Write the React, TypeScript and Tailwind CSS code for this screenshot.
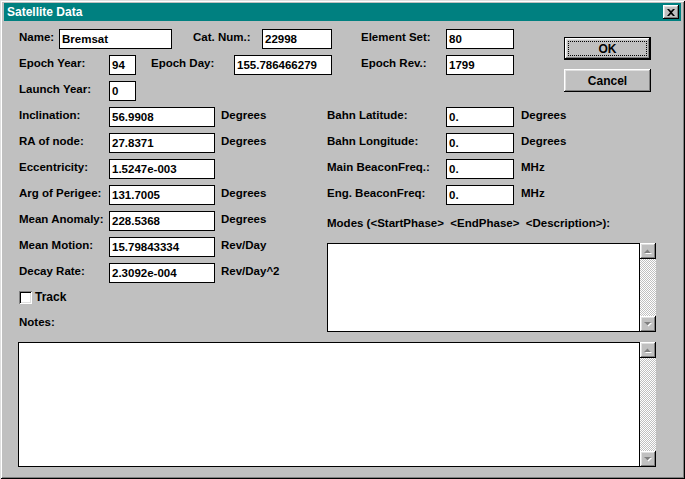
import React from 'react';

const bevel =
  'shadow-[inset_-1px_-1px_#000,inset_1px_1px_#fff,inset_-2px_-2px_#808080,inset_2px_2px_#dfdfdf]';

function Box({ w, value }: { w: string; value?: string }) {
  return (
    <div className={`${w} h-[20px] shrink-0 bg-white border border-black pl-[2px] leading-[18px] overflow-hidden whitespace-nowrap`}>
      {value}
    </div>
  );
}

function Label({ w, children, className = '' }: { w?: string; children: React.ReactNode; className?: string }) {
  return <div className={`${w ?? ''} shrink-0 leading-[16px] whitespace-nowrap ${className}`}>{children}</div>;
}

function Arrow({ down }: { down?: boolean }) {
  const pts = down ? '1,2 8,2 4.5,5.5' : '1,6 8,6 4.5,2.5';
  const ptsShadow = down ? '2,3 9,3 5.5,6.5' : '2,7 9,7 5.5,3.5';
  return (
    <svg width="10" height="9" viewBox="0 0 10 9">
      <polygon points={ptsShadow} fill="#fff" />
      <polygon points={pts} fill="#808080" />
    </svg>
  );
}

function ScrollArea({ w, h }: { w: string; h: string }) {
  return (
    <div className={`flex ${h}`}>
      <div className={`${w} h-full bg-white border border-black`} />
      <div className="w-[16px] h-full flex flex-col">
        <div className={`h-[16px] bg-[#c0c0c0] ${bevel} flex items-center justify-center`}>
          <Arrow />
        </div>
        <div className="flex-1 bg-[image:repeating-conic-gradient(#c0c0c0_0_25%,#fff_0_50%)] bg-[length:2px_2px]" />
        <div className={`h-[16px] bg-[#c0c0c0] ${bevel} flex items-center justify-center`}>
          <Arrow down />
        </div>
      </div>
    </div>
  );
}

const leftRows = [
  { label: 'Inclination:', value: '56.9908', unit: 'Degrees' },
  { label: 'RA of node:', value: '27.8371', unit: 'Degrees' },
  { label: 'Eccentricity:', value: '1.5247e-003', unit: '' },
  { label: 'Arg of Perigee:', value: '131.7005', unit: 'Degrees' },
  { label: 'Mean Anomaly:', value: '228.5368', unit: 'Degrees' },
  { label: 'Mean Motion:', value: '15.79843334', unit: 'Rev/Day' },
  { label: 'Decay Rate:', value: '2.3092e-004', unit: 'Rev/Day^2' },
];

const rightRows = [
  { label: 'Bahn Latitude:', value: '0.', unit: 'Degrees' },
  { label: 'Bahn Longitude:', value: '0.', unit: 'Degrees' },
  { label: 'Main BeaconFreq.:', value: '0.', unit: 'MHz' },
  { label: 'Eng. BeaconFreq:', value: '0.', unit: 'MHz' },
];

export default function App() {
  return (
    <div
      className={`w-[685px] h-[479px] bg-[#c0c0c0] px-[4px] pt-[3px] text-black text-[11.5px] font-bold font-['Liberation_Sans',Arial,sans-serif] shadow-[inset_1px_1px_#dfdfdf,inset_-1px_-1px_#000,inset_2px_2px_#fff,inset_-2px_-2px_#808080] overflow-hidden`}
    >
      {/* title bar */}
      <div className="h-[18px] bg-[#008080] flex items-center justify-between pl-[3px] pr-[2px]">
        <span className="text-white text-[12px] leading-[18px]">Satellite Data</span>
        <button className={`w-[16px] h-[14px] bg-[#c0c0c0] ${bevel} flex items-center justify-center`}>
          <svg width="8" height="7" viewBox="0 0 8 7">
            <path d="M0 0h2l2 2 2-2h2L5 3.5 8 7H6L4 5 2 7H0l3-3.5z" fill="#000" />
          </svg>
        </button>
      </div>

      {/* top section */}
      <div className="flex pl-[15px]">
        <div className="pt-[8px] flex flex-col gap-[6px]">
          <div className="flex h-[20px]">
            <Label w="w-[40px]">Name:</Label>
            <Box w="w-[113px]" value="Bremsat" />
            <Label w="w-[69px]" className="ml-[21px]">Cat. Num.:</Label>
            <Box w="w-[70px]" value="22998" />
            <Label w="w-[85px]" className="ml-[29px]">Element Set:</Label>
            <Box w="w-[68px]" value="80" />
          </div>
          <div className="flex h-[20px]">
            <Label w="w-[90px]">Epoch Year:</Label>
            <Box w="w-[27px]" value="94" />
            <Label w="w-[83px]" className="ml-[15px]">Epoch Day:</Label>
            <Box w="w-[98px]" value="155.786466279" />
            <Label w="w-[85px]" className="ml-[29px]">Epoch Rev.:</Label>
            <Box w="w-[68px]" value="1799" />
          </div>
          <div className="flex h-[20px]">
            <Label w="w-[90px]">Launch Year:</Label>
            <Box w="w-[27px]" value="0" />
          </div>
        </div>
        <div className="pt-[16px] ml-[50px] flex flex-col gap-[9px]">
          <button className="w-[87px] h-[23px] border border-black bg-[#c0c0c0] p-0">
            <div className={`w-full h-full ${bevel} p-[3px]`}>
              <div className="w-full h-full border border-dotted border-black flex items-center justify-center text-[12px] leading-none">
                OK
              </div>
            </div>
          </button>
          <button className={`w-[87px] h-[23px] bg-[#c0c0c0] ${bevel} flex items-center justify-center text-[12px]`}>
            Cancel
          </button>
        </div>
      </div>

      {/* middle section */}
      <div className="flex pl-[15px] mt-[6px]">
        <div className="w-[308px] shrink-0 flex flex-col">
          <div className="flex flex-col gap-[6px]">
            {leftRows.map((r) => (
              <div key={r.label} className="flex h-[20px]">
                <Label w="w-[90px]">{r.label}</Label>
                <Box w="w-[106px]" value={r.value} />
                <Label className="ml-[6px]">{r.unit}</Label>
              </div>
            ))}
          </div>
          <div className="flex items-center mt-[8px] h-[13px]">
            <div className="w-[13px] h-[13px] bg-white shadow-[inset_1px_1px_#808080,inset_-1px_-1px_#fff,inset_2px_2px_#000,inset_-2px_-2px_#dfdfdf]" />
            <span className="ml-[3px] text-[12px] leading-[13px]">Track</span>
          </div>
          <Label className="mt-[10px]">Notes:</Label>
        </div>
        <div className="flex flex-col">
          <div className="flex flex-col gap-[6px]">
            {rightRows.map((r) => (
              <div key={r.label} className="flex h-[20px]">
                <Label w="w-[119px]">{r.label}</Label>
                <Box w="w-[68px]" value={r.value} />
                <Label className="ml-[7px]">{r.unit}</Label>
              </div>
            ))}
          </div>
          <Label className="mt-[10px] whitespace-pre">{'Modes (<StartPhase>  <EndPhase>  <Description>):'}</Label>
          <div className="mt-[12px]">
            <ScrollArea w="w-[313px]" h="h-[89px]" />
          </div>
        </div>
      </div>

      {/* notes */}
      <div className="pl-[14px] mt-[10px]">
        <ScrollArea w="w-[622px]" h="h-[125px]" />
      </div>
    </div>
  );
}
